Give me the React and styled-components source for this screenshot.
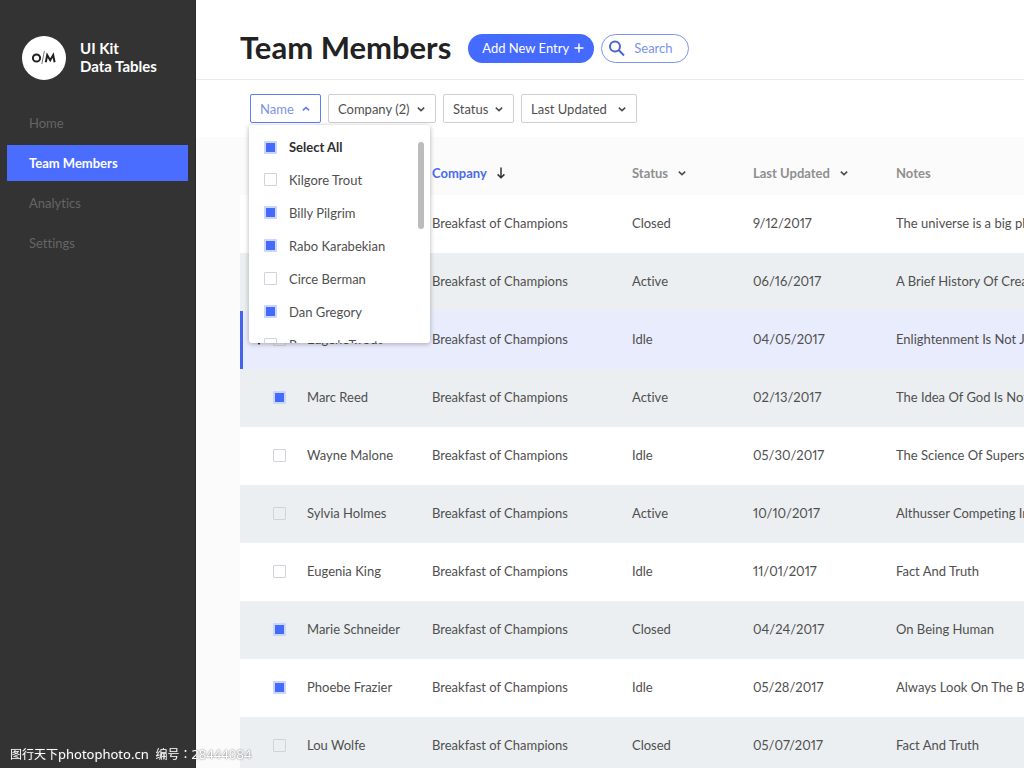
import React from 'react';
import styled, { createGlobalStyle } from 'styled-components';

const GlobalStyle = createGlobalStyle`
  * {
    box-sizing: border-box;
  }
  body {
    margin: 0;
    background: #fbfbfb;
    color: #4f4f4f;
    font-family: Lato, "Liberation Sans", sans-serif;
    font-size: 13px;
    font-variant-ligatures: none;
    font-variant-numeric: proportional-nums;
    line-height: 18px;
  }
  button, input {
    font: inherit;
    font-variant-ligatures: none;
  }
`;

const Page = styled.div`
  display: flex;
  height: 100vh;
  overflow: hidden;
`;

const Sidebar = styled.aside`
  flex: 0 0 196px;
  padding: 36px 7px 0;
  background: #333333;
  border-right: 1px solid #2a2a2a;
`;

const Brand = styled.div`
  display: flex;
  align-items: center;
  gap: 14px;
  padding-left: 15px;
  margin-bottom: 25px;
`;

const LogoCircle = styled.div`
  display: flex;
  align-items: center;
  justify-content: center;
  width: 44px;
  height: 44px;
  border-radius: 50%;
  background: #fff;
`;

const BrandName = styled.div`
  padding-bottom: 2px;
  color: #fff;
  font-size: 15px;
  font-weight: 700;
  line-height: 18px;
`;

const Nav = styled.nav`
  display: flex;
  flex-direction: column;
  gap: 4px;
`;

const NavLink = styled.a`
  height: 36px;
  padding-left: 22px;
  line-height: 36px;
  text-decoration: none;
  color: ${(props) => (props.$active ? '#fff' : '#656565')};
  background: ${(props) => (props.$active ? '#4a6dff' : 'transparent')};
  font-weight: ${(props) => (props.$active ? 700 : 400)};
`;

const Main = styled.main`
  flex: 1;
  min-width: 0;
`;

const Header = styled.header`
  display: flex;
  align-items: center;
  height: 80px;
  padding: 17px 44px 0;
  background: #fff;
  border-bottom: 1px solid #ebebeb;
`;

const Title = styled.h1`
  margin: 0 17px 0 0;
  padding-bottom: 2px;
  color: #222;
  font-size: 31px;
  font-weight: 700;
  line-height: 36px;
  white-space: nowrap;
`;

const Actions = styled.div`
  display: flex;
  gap: 7px;
`;

const AddButton = styled.button`
  display: flex;
  align-items: center;
  justify-content: space-between;
  width: 126px;
  height: 29px;
  padding: 0 10px 0 14px;
  border: 0;
  border-radius: 15px;
  background: #446aff;
  color: #fff;
  white-space: nowrap;
`;

const SearchBox = styled.label`
  display: flex;
  align-items: center;
  gap: 8px;
  width: 88px;
  height: 29px;
  padding: 0 4px 0 6px;
  border: 1px solid #7b93f2;
  border-radius: 15px;
  background: #fff;
  svg {
    flex: none;
  }
`;

const SearchInput = styled.input`
  width: 100%;
  min-width: 0;
  padding: 0;
  border: 0;
  outline: 0;
  background: none;
  color: #4a6bea;
  &::placeholder {
    color: #7b93ea;
    opacity: 1;
  }
`;

const Filters = styled.div`
  display: flex;
  gap: 7px;
  height: 57px;
  padding: 14px 54px 0;
  background: #fff;
`;

const Filter = styled.div`
  position: relative;
`;

const FilterButton = styled.button`
  display: flex;
  align-items: center;
  justify-content: space-between;
  width: ${(props) => props.$width}px;
  height: 29px;
  padding: 0 9px;
  border: 1px solid ${(props) => (props.$open ? '#5f7ef5' : '#cfcfd3')};
  border-radius: 2px;
  background: #fff;
  color: ${(props) => (props.$open ? '#7b93ea' : '#4f4f4f')};
  white-space: nowrap;
`;

const Menu = styled.div`
  position: absolute;
  top: 31px;
  left: -1px;
  z-index: 10;
  width: 181px;
  height: 218px;
  padding: 6px 15px 0;
  overflow: hidden;
  border-radius: 3px;
  background: #fff;
  box-shadow: 0 1px 5px rgba(0, 0, 0, 0.3);
`;

const MenuItem = styled.label`
  display: flex;
  align-items: center;
  gap: 12px;
  height: ${(props) => (props.$strong ? 32 : 33)}px;
  color: ${(props) => (props.$strong ? '#2f2f2f' : '#4f4f4f')};
  font-weight: ${(props) => (props.$strong ? 700 : 400)};
  white-space: nowrap;
`;

const ScrollThumb = styled.div`
  position: absolute;
  top: 17px;
  right: 6px;
  width: 6px;
  height: 87px;
  border-radius: 3px;
  background: #bcbcbc;
`;

const Checkbox = styled.input.attrs({ type: 'checkbox' })`
  appearance: none;
  display: block;
  flex: none;
  width: 13px;
  height: 13px;
  margin: 0;
  border: 1px solid #d0d3d9;
  border-radius: 1px;
  &:checked {
    border: 2px solid #cbd6fb;
    background: #446aff;
    background-clip: padding-box;
  }
`;

const TableWrapper = styled.div`
  padding-left: 44px;
`;

const Table = styled.table`
  width: 100%;
  table-layout: fixed;
  border-collapse: collapse;
`;

const Col = styled.col`
  width: ${(props) => (props.$width ? `${props.$width}px` : 'auto')};
`;

const HeadCell = styled.th`
  height: 58px;
  padding: 14px 0 0;
  color: ${(props) => (props.$sorted ? '#4a6bea' : '#8f8f8f')};
  font-weight: 700;
  text-align: left;
  white-space: nowrap;
`;

const HeadLabel = styled.span`
  display: flex;
  align-items: center;
  gap: 9px;
`;

const Row = styled.tr`
  background: ${(props) => (props.$selected ? '#e9ecfd' : '#fff')};
  box-shadow: ${(props) => (props.$selected ? 'inset 3px 0 #4465ea' : 'none')};
  &:nth-child(even) {
    background: #eceff1;
  }
`;

const Cell = styled.td`
  height: 58px;
  padding: 0 0 2px;
  overflow: hidden;
  white-space: nowrap;
`;

const CheckCell = styled.div`
  display: flex;
  align-items: center;
  justify-content: flex-end;
  gap: 10px;
  padding-right: 21px;
`;

const Watermark = styled.div`
  position: fixed;
  left: 10px;
  bottom: 4px;
  color: #fff;
  font-family: "Noto Sans", "Noto Sans CJK SC", sans-serif;
  font-size: 13px;
  line-height: 20px;
  text-shadow: 0 0 2px #555;
  white-space: pre;
`;

const Chinese = styled.span`
  font-family: "Noto Sans CJK TC", "Noto Sans CJK SC", sans-serif;
  font-size: 12px;
`;

const navItems = ['Home', 'Team Members', 'Analytics', 'Settings'];

const menuItems = [
  { label: 'Select All', checked: true, strong: true },
  { label: 'Kilgore Trout', checked: false },
  { label: 'Billy Pilgrim', checked: true },
  { label: 'Rabo Karabekian', checked: true },
  { label: 'Circe Berman', checked: false },
  { label: 'Dan Gregory', checked: true },
  { label: "Revenge's Trout", checked: false },
];

const company = 'Breakfast of Champions';

const members = [
  { name: 'Kilgore Trout', status: 'Closed', updated: '9/12/2017', notes: 'The universe is a big place' },
  { name: 'Billy Pilgrim', status: 'Active', updated: '06/16/2017', notes: 'A Brief History Of Creation' },
  { name: 'Eugene Trout', status: 'Idle', updated: '04/05/2017', notes: 'Enlightenment Is Not Just One State', selected: true },
  { name: 'Marc Reed', status: 'Active', updated: '02/13/2017', notes: 'The Idea Of God Is Not Henceforth', checked: true },
  { name: 'Wayne Malone', status: 'Idle', updated: '05/30/2017', notes: 'The Science Of Superstitions' },
  { name: 'Sylvia Holmes', status: 'Active', updated: '10/10/2017', notes: 'Althusser Competing Interpellations' },
  { name: 'Eugenia King', status: 'Idle', updated: '11/01/2017', notes: 'Fact And Truth' },
  { name: 'Marie Schneider', status: 'Closed', updated: '04/24/2017', notes: 'On Being Human', checked: true },
  { name: 'Phoebe Frazier', status: 'Idle', updated: '05/28/2017', notes: 'Always Look On The Bright Side Of Life', checked: true },
  { name: 'Lou Wolfe', status: 'Closed', updated: '05/07/2017', notes: 'Fact And Truth' },
];

function Chevron({ up, color = '#4a4a4a' }) {
  return (
    <svg width="10" height="10" viewBox="0 0 10 10" fill="none" stroke={color} strokeWidth="1.5" aria-hidden="true">
      <path d={up ? 'M1.8 6.4 5 3.6l3.2 2.8' : 'M1.8 3.6 5 6.6l3.2-3'} />
    </svg>
  );
}

function ArrowDown() {
  return (
    <svg width="10" height="12" viewBox="0 0 10 12" fill="none" stroke="#333" strokeWidth="1.5" aria-hidden="true">
      <path d="M5 .5v10M1.6 7.4 5 10.8l3.4-3.4" />
    </svg>
  );
}

function Logo() {
  return (
    <svg width="26" height="18" viewBox="0 0 26 18" fill="none" stroke="#222" strokeWidth="2" role="img" aria-label="O/M">
      <circle cx="5.5" cy="9" r="3.6" />
      <path d="M10.8 15 13.4 2" stroke="#777" strokeWidth="1" />
      <path d="M14.8 13.2 16.2 6l3 5.2 3-5.2 1.4 7.2" strokeWidth="2" />
    </svg>
  );
}

function NameFilter() {
  return (
    <Filter>
      <FilterButton $width={71} $open aria-haspopup="true" aria-expanded="true">
        Name <Chevron up color="#5f7ef5" />
      </FilterButton>
      <Menu>
        {menuItems.map((item) => (
          <MenuItem key={item.label} $strong={item.strong}>
            <Checkbox defaultChecked={item.checked} />
            {item.label}
          </MenuItem>
        ))}
        <ScrollThumb />
      </Menu>
    </Filter>
  );
}

function MembersTable() {
  return (
    <TableWrapper>
      <Table>
        <colgroup>
          <Col $width={67} />
          <Col $width={125} />
          <Col $width={200} />
          <Col $width={121} />
          <Col $width={143} />
          <Col />
        </colgroup>
        <thead>
          <tr>
            <HeadCell aria-label="Selected" />
            <HeadCell>Name</HeadCell>
            <HeadCell $sorted aria-sort="descending">
              <HeadLabel>Company <ArrowDown /></HeadLabel>
            </HeadCell>
            <HeadCell>
              <HeadLabel>Status <Chevron /></HeadLabel>
            </HeadCell>
            <HeadCell>
              <HeadLabel>Last Updated <Chevron /></HeadLabel>
            </HeadCell>
            <HeadCell>Notes</HeadCell>
          </tr>
        </thead>
        <tbody>
          {members.map((member, i) => (
            <Row key={member.name} $selected={member.selected}>
              <Cell>
                <CheckCell>
                  {member.selected && (
                    <svg width="8" height="12" viewBox="0 0 8 12" aria-hidden="true">
                      <path d="M0 6h8L4 12z" fill="#222" />
                    </svg>
                  )}
                  <Checkbox id={`member-${i}`} defaultChecked={member.checked} />
                </CheckCell>
              </Cell>
              <Cell>
                <label htmlFor={`member-${i}`}>{member.name}</label>
              </Cell>
              <Cell>{company}</Cell>
              <Cell>{member.status}</Cell>
              <Cell>{member.updated}</Cell>
              <Cell>{member.notes}</Cell>
            </Row>
          ))}
        </tbody>
      </Table>
    </TableWrapper>
  );
}

function App() {
  return (
    <>
      <GlobalStyle />
      <Page>
        <Sidebar>
          <Brand>
            <LogoCircle>
              <Logo />
            </LogoCircle>
            <BrandName>
              UI Kit
              <br />
              Data Tables
            </BrandName>
          </Brand>
          <Nav>
            {navItems.map((item) => (
              <NavLink key={item} href="#" $active={item === 'Team Members'}>
                {item}
              </NavLink>
            ))}
          </Nav>
        </Sidebar>
        <Main>
          <Header>
            <Title>Team Members</Title>
            <Actions>
              <AddButton>
                Add New Entry
                <svg width="10" height="10" viewBox="0 0 10 10" stroke="#fff" strokeWidth="1.4" aria-hidden="true">
                  <path d="M5 .5v9M.5 5h9" />
                </svg>
              </AddButton>
              <SearchBox>
                <svg width="18" height="18" viewBox="0 0 18 18" fill="none" stroke="#4a66d0" strokeWidth="2" aria-hidden="true">
                  <circle cx="7" cy="7.5" r="5" />
                  <path d="m10.8 11.3 5.2 5.2" />
                </svg>
                <SearchInput type="text" placeholder="Search" aria-label="Search" />
              </SearchBox>
            </Actions>
          </Header>
          <Filters>
            <NameFilter />
            <FilterButton $width={108} aria-haspopup="true">
              Company (2) <Chevron />
            </FilterButton>
            <FilterButton $width={71} aria-haspopup="true">
              Status <Chevron />
            </FilterButton>
            <FilterButton $width={116} aria-haspopup="true">
              Last Updated <Chevron />
            </FilterButton>
          </Filters>
          <MembersTable />
        </Main>
      </Page>
      <Watermark>
        <Chinese>图行天下</Chinese>photophoto.cn  <Chinese>编号：</Chinese>28444084
      </Watermark>
    </>
  );
}

export default App;
